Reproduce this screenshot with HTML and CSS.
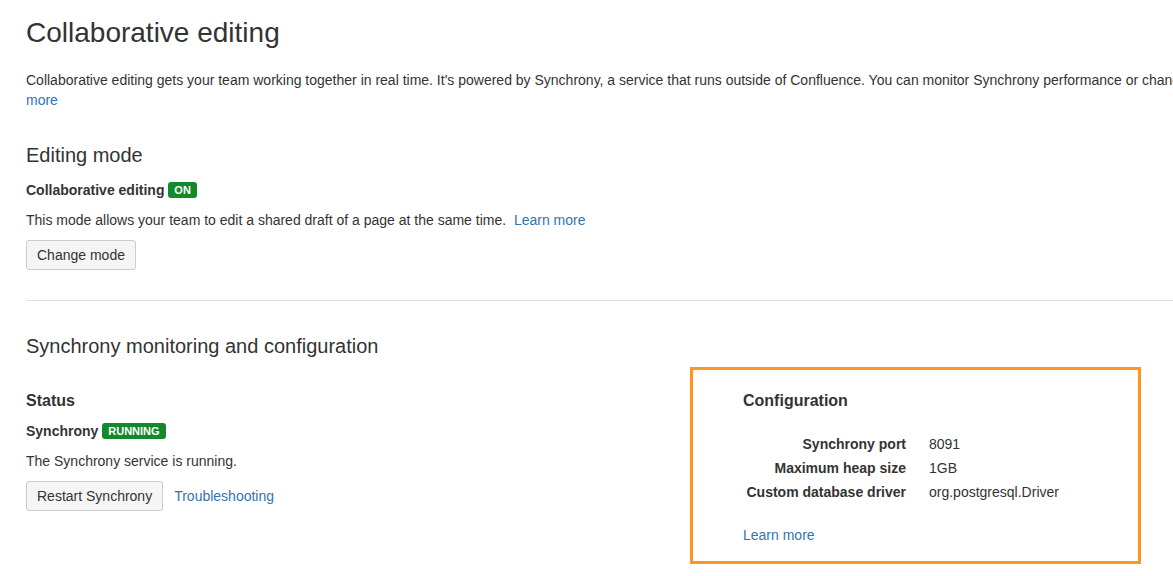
FILE: index.html
```html
<!DOCTYPE html>
<html lang="en">
<head>
<meta charset="utf-8">
<title>Collaborative editing</title>
<link rel="stylesheet" href="styles.css">
</head>
<body>
<div class="page">
  <h1 class="page-title">Collaborative editing</h1>
  <p class="intro">Collaborative editing gets your team working together in real time. It's powered by Synchrony, a service that runs outside of Confluence. You can monitor Synchrony performance or change its configuration below. <a href="#" class="link">Learn more</a></p>

  <h2 class="section-title mode-title">Editing mode</h2>
  <div class="status-line"><strong>Collaborative editing</strong> <span class="lozenge">On</span></div>
  <p class="text-line">This mode allows your team to edit a shared draft of a page at the same time. &nbsp;<a href="#" class="link">Learn more</a></p>
  <div class="actions"><button class="btn">Change mode</button></div>

  <hr class="divider">

  <h2 class="section-title sync-title">Synchrony monitoring and configuration</h2>

  <div class="sync-columns">
    <div class="status-col">
      <h3 class="sub-title">Status</h3>
      <div class="status-line"><strong>Synchrony</strong> <span class="lozenge">Running</span></div>
      <p class="text-line">The Synchrony service is running.</p>
      <div class="actions"><button class="btn">Restart Synchrony</button><a href="#" class="link trouble">Troubleshooting</a></div>
    </div>
    <div class="config-box">
      <h3 class="sub-title">Configuration</h3>
      <dl class="config-table">
        <dt>Synchrony port</dt><dd>8091</dd>
        <dt>Maximum heap size</dt><dd>1GB</dd>
        <dt>Custom database driver</dt><dd>org.postgresql.Driver</dd>
      </dl>
      <a href="#" class="link config-learn">Learn more</a>
    </div>
  </div>
</div>
</body>
</html>
```
FILE: styles.css
```css
html, body {
  margin: 0;
  padding: 0;
  background: #fff;
  overflow: hidden;
}
body {
  font-family: "Liberation Sans", Arial, Helvetica, sans-serif;
  font-size: 14px;
  line-height: 20px;
  color: #333;
}
.page {
  width: 1362px;
  padding-left: 26px;
}
.page-title {
  margin: 15px 0 0;
  font-size: 28px;
  line-height: 35px;
  font-weight: normal;
  color: #333;
}
.intro {
  margin: 20px 0 0;
}
.link {
  color: #3572b0;
  text-decoration: none;
}
.section-title {
  font-size: 20px;
  line-height: 24px;
  font-weight: normal;
  color: #333;
  margin: 0;
}
.mode-title {
  margin-top: 33px;
}
.status-line {
  margin-top: 13px;
  height: 20px;
}
.status-line strong {
  font-weight: bold;
}
.lozenge {
  display: inline-block;
  background: #14892c;
  color: #fff;
  font-size: 11px;
  font-weight: bold;
  text-transform: uppercase;
  line-height: 16px;
  padding: 0 6px;
  border-radius: 3px;
  vertical-align: 1px;
}
.text-line {
  margin: 10px 0 0;
}
.actions {
  margin-top: 10px;
  display: flex;
  align-items: center;
}
.btn {
  font-family: inherit;
  font-size: 14px;
  color: #333;
  height: 30px;
  padding: 0 10px;
  background: #f5f5f5;
  border: 1px solid #ccc;
  border-radius: 3px;
  line-height: 28px;
}
.trouble {
  margin-left: 11px;
}
.divider {
  border: 0;
  border-top: 1px solid #e0e0e0;
  margin: 30px 0 0;
  height: 0;
}
.sync-title {
  margin-top: 33px;
}
.sync-columns {
  display: flex;
  margin-top: 9px;
}
.status-col {
  width: 664px;
  padding-top: 24px;
}
.sub-title {
  margin: 0;
  font-size: 16px;
  line-height: 20px;
  font-weight: bold;
  color: #333;
}
.status-col .status-line {
  margin-top: 10px;
}
.config-box {
  width: 395px;
  border: 3px solid #fb961f;
  padding: 21px 0 16px 50px;
}
.config-table {
  display: grid;
  grid-template-columns: 163px auto;
  column-gap: 23px;
  margin: 21px 0 0;
  line-height: 24px;
}
.config-table dt {
  font-weight: bold;
  text-align: right;
}
.config-table dd {
  margin: 0;
}
.config-learn {
  display: block;
  margin-top: 21px;
}
```
